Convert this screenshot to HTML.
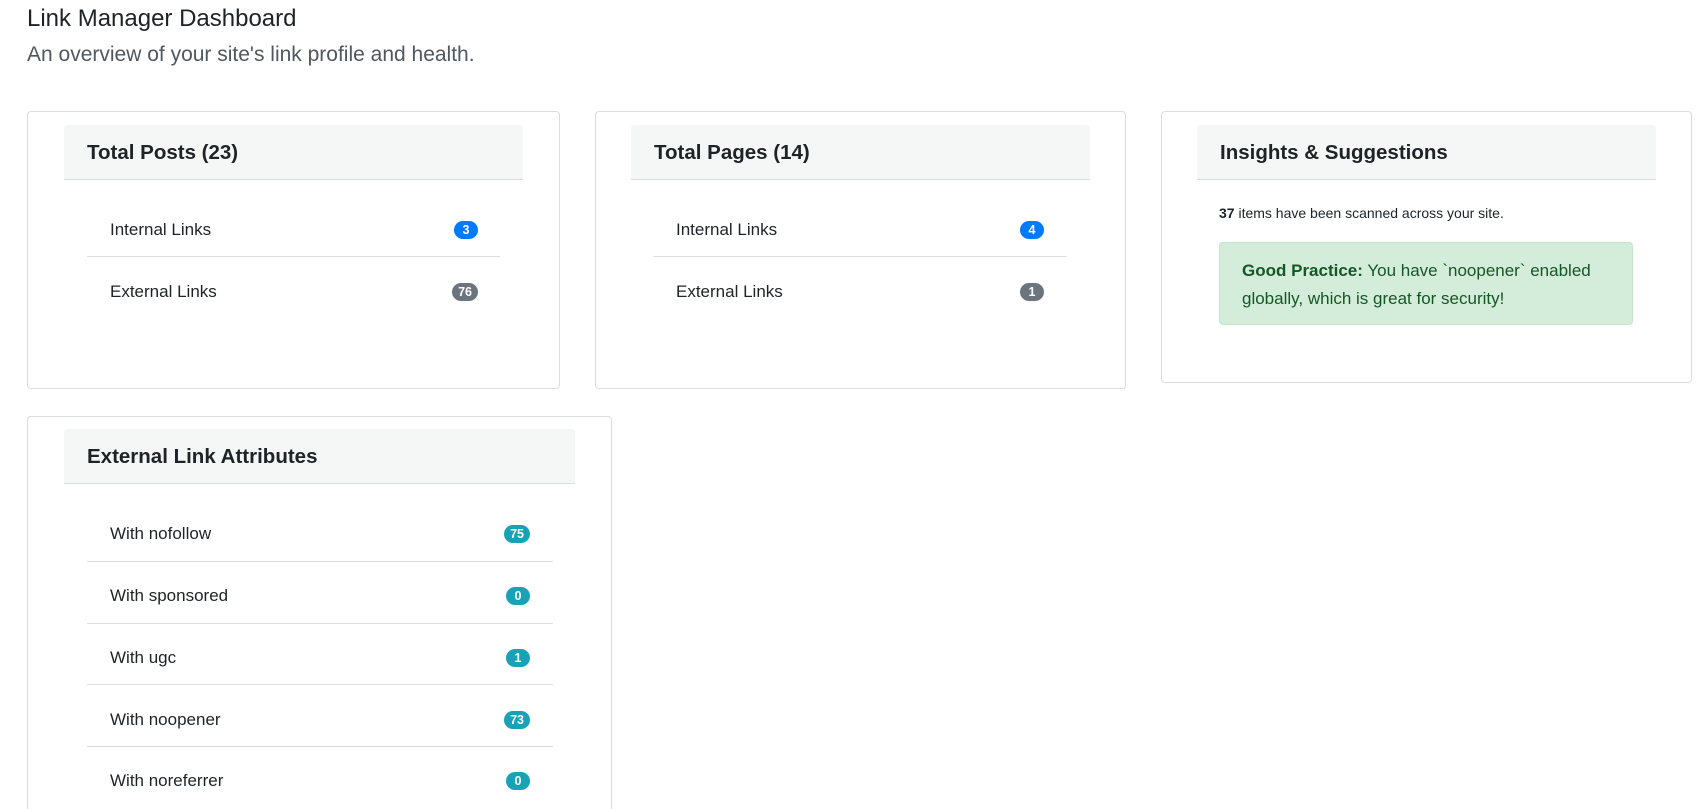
<!DOCTYPE html>
<html><head><meta charset="utf-8"><style>
*{box-sizing:border-box;margin:0;padding:0}
html,body{width:1703px;height:809px;overflow:hidden}
body{background:#fff;font-family:"Liberation Sans",sans-serif;color:#212529;position:relative}
.a{position:absolute}
.card{position:absolute;border:1px solid #dcdcdc;border-radius:4px;background:#fff}
.hd{position:absolute;background:#f5f6f6;border-bottom:1px solid #dcdcdc;border-radius:3px 3px 0 0;font-size:20.5px;font-weight:600;color:#1d2327;padding-left:23px;padding-top:2px;display:flex;align-items:center}
.row{position:absolute;font-size:17px;color:#1d2327;display:flex;align-items:center;justify-content:space-between}
.sep{position:absolute;height:1px;background:#dcdcdc}
.b{display:inline-block;color:#fff;font-size:12.5px;font-weight:700;border-radius:10px;min-width:24px;height:18px;line-height:18px;text-align:center;padding:0 6px}
.blue{background:#007bff}.gray{background:#6c757d}.teal{background:#17a2b8}
</style></head><body>
<div class="a" style="left:27px;top:5px;font-size:24px;color:#1d2327">Link Manager Dashboard</div>
<div class="a" style="left:27px;top:43px;font-size:21px;color:#50575e;font-weight:300">An overview of your site's link profile and health.</div>

<div class="card" style="left:27px;top:111px;width:533px;height:278px"></div>
<div class="hd" style="left:64px;top:125px;width:459px;height:55px">Total Posts (23)</div>
<div class="row" style="left:110px;top:216px;width:368px;height:28px"><span>Internal Links</span><span class="b blue">3</span></div>
<div class="sep" style="left:87px;top:256px;width:413px"></div>
<div class="row" style="left:110px;top:278px;width:368px;height:28px"><span>External Links</span><span class="b gray">76</span></div>

<div class="card" style="left:595px;top:111px;width:531px;height:278px"></div>
<div class="hd" style="left:631px;top:125px;width:459px;height:55px">Total Pages (14)</div>
<div class="row" style="left:676px;top:216px;width:368px;height:28px"><span>Internal Links</span><span class="b blue">4</span></div>
<div class="sep" style="left:653px;top:256px;width:414px"></div>
<div class="row" style="left:676px;top:278px;width:368px;height:28px"><span>External Links</span><span class="b gray">1</span></div>

<div class="card" style="left:1161px;top:111px;width:531px;height:272px"></div>
<div class="hd" style="left:1197px;top:125px;width:459px;height:55px">Insights &amp; Suggestions</div>
<div class="a" style="left:1219px;top:205px;font-size:14px;color:#1d2327"><b>37</b> items have been scanned across your site.</div>
<div class="a" style="left:1219px;top:242px;width:414px;height:83px;background:#d4edda;border:1px solid #c3e6cb;border-radius:4px;color:#155724;font-size:17px;line-height:28px;padding:14px 22px"><b>Good Practice:</b> You have `noopener` enabled globally, which is great for security!</div>

<div class="card" style="left:27px;top:416px;width:585px;height:500px"></div>
<div class="hd" style="left:64px;top:429px;width:511px;height:55px">External Link Attributes</div>
<div class="row" style="left:110px;top:520px;width:420px;height:28px"><span>With nofollow</span><span class="b teal">75</span></div>
<div class="sep" style="left:87px;top:561px;width:466px"></div>
<div class="row" style="left:110px;top:582px;width:420px;height:28px"><span>With sponsored</span><span class="b teal">0</span></div>
<div class="sep" style="left:87px;top:623px;width:466px"></div>
<div class="row" style="left:110px;top:644px;width:420px;height:28px"><span>With ugc</span><span class="b teal">1</span></div>
<div class="sep" style="left:87px;top:684px;width:466px"></div>
<div class="row" style="left:110px;top:706px;width:420px;height:28px"><span>With noopener</span><span class="b teal">73</span></div>
<div class="sep" style="left:87px;top:746px;width:466px"></div>
<div class="row" style="left:110px;top:767px;width:420px;height:28px"><span>With noreferrer</span><span class="b teal">0</span></div>
</body></html>
